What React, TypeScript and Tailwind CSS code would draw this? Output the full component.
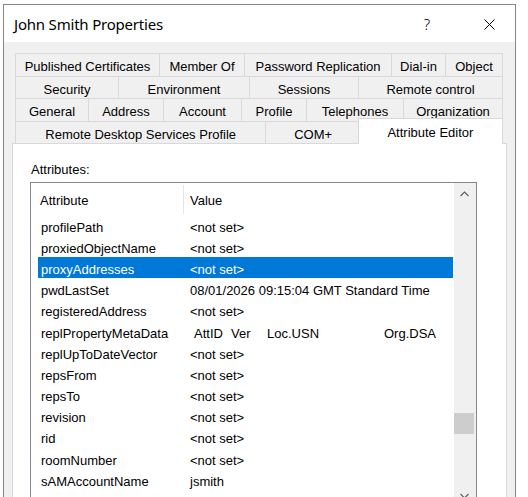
import React from 'react'

type Tab = { label: string; w: string }

const TAB_ROWS: { h: string; tabs: Tab[] }[] = [
  {
    h: 'h-[23px]',
    tabs: [
      { label: 'Published Certificates', w: 'w-[144px]' },
      { label: 'Member Of', w: 'w-[85px]' },
      { label: 'Password Replication', w: 'w-[147px]' },
      { label: 'Dial-in', w: 'w-[54px]' },
      { label: 'Object', w: 'w-[58px]' },
    ],
  },
  {
    h: 'h-[22px]',
    tabs: [
      { label: 'Security', w: 'w-[103px]' },
      { label: 'Environment', w: 'w-[131px]' },
      { label: 'Sessions', w: 'w-[109px]' },
      { label: 'Remote control', w: 'w-[145px]' },
    ],
  },
  {
    h: 'h-[23px]',
    tabs: [
      { label: 'General', w: 'w-[73px]' },
      { label: 'Address', w: 'w-[75px]' },
      { label: 'Account', w: 'w-[78px]' },
      { label: 'Profile', w: 'w-[65px]' },
      { label: 'Telephones', w: 'w-[97px]' },
      { label: 'Organization', w: 'w-[100px]' },
    ],
  },
]

const ATTRIBUTES: { name: string; value: string }[] = [
  { name: 'profilePath', value: '<not set>' },
  { name: 'proxiedObjectName', value: '<not set>' },
  { name: 'proxyAddresses', value: '<not set>' },
  { name: 'pwdLastSet', value: '08/01/2026 09:15:04 GMT Standard Time' },
  { name: 'registeredAddress', value: '<not set>' },
  { name: 'replPropertyMetaData', value: 'META' },
  { name: 'replUpToDateVector', value: '<not set>' },
  { name: 'repsFrom', value: '<not set>' },
  { name: 'repsTo', value: '<not set>' },
  { name: 'revision', value: '<not set>' },
  { name: 'rid', value: '<not set>' },
  { name: 'roomNumber', value: '<not set>' },
  { name: 'sAMAccountName', value: 'jsmith' },
]

const SELECTED = 'proxyAddresses'

function TabRow({ h, tabs }: { h: string; tabs: Tab[] }) {
  return (
    <div className={`flex ${h}`}>
      {tabs.map((t, i) => (
        <div
          key={t.label}
          className={`${t.w} pt-[4px] flex items-center justify-center border-t border-l border-[#d9d9d9] bg-[#f0f0f0] ${
            i === tabs.length - 1 ? 'border-r' : ''
          }`}
        >
          {t.label}
        </div>
      ))}
    </div>
  )
}

function Chevron({ down }: { down?: boolean }) {
  return (
    <svg width="9" height="6" viewBox="0 0 9 6" className={down ? 'rotate-180' : ''}>
      <path d="M0.5 5 L4.5 1 L8.5 5" fill="none" stroke="#606060" strokeWidth="1.2" />
    </svg>
  )
}

export default function App() {
  return (
    <div
      className="w-[528px] h-[497px] overflow-hidden bg-white pt-[4px] pl-[3px] text-[13px] text-black"
      style={{ fontFamily: '"Liberation Sans", Arial, sans-serif' }}
    >
      <div className="w-[513px] h-[540px] border border-[#868686] bg-[#f0f0f0] flex flex-col">
        {/* Title bar */}
        <div
          className="h-[38px] bg-white flex items-center justify-between pl-[10px] pt-[1px]"
          style={{ fontFamily: '"Noto Sans", "Open Sans", sans-serif' }}
        >
          <span className="text-[15px] tracking-[-0.2px]">John Smith Properties</span>
          <div className="flex items-center gap-[16px] mr-[3px]">
            <div className="w-[46px] flex justify-center text-[15px] font-light">?</div>
            <div className="w-[46px] flex justify-center">
              <svg width="11" height="11" viewBox="0 0 11 11">
                <path d="M0.5 0.5 L10.5 10.5 M10.5 0.5 L0.5 10.5" stroke="#000" strokeWidth="1" />
              </svg>
            </div>
          </div>
        </div>

        {/* Body */}
        <div className="flex-1 pt-[11px] px-[8px]">
          <div className="ml-[3px] w-[488px]">
            {TAB_ROWS.map((r, i) => (
              <TabRow key={i} h={r.h} tabs={r.tabs} />
            ))}
            <div className="flex items-end h-[22px]">
              <div className="w-[252px] h-full pt-[4px] flex items-center justify-center border-t border-l border-[#d9d9d9]">
                Remote Desktop Services Profile
              </div>
              <div className="w-[95px] h-full pt-[4px] flex items-center justify-center border-t border-l border-[#d9d9d9]">
                COM+
              </div>
              <div className="relative z-10 -ml-[2px] -mb-[1px] w-[146px] h-[26px] pt-[2px] flex items-center justify-center border-t border-l border-r border-[#d9d9d9] bg-white">
                Attribute Editor
              </div>
            </div>
          </div>

          {/* Page */}
          <div className="w-[495px] h-[400px] border border-[#d9d9d9] bg-white px-[17px] pt-[18px]">
            <div className="pl-[1px] leading-[15px]">Attributes:</div>
            <div className="mt-[5px] w-[447px] h-[330px] border border-[#828790] flex">
              <div className="flex-1">
                <div className="h-[32px] flex">
                  <div className="w-[152px] pl-[9px] pt-[4px] flex items-center">Attribute</div>
                  <div className="w-[1px] mt-[2px] h-[29px] bg-[#e5e5e5]" />
                  <div className="pl-[6px] pt-[4px] flex items-center">Value</div>
                </div>
                <div className="ml-[7px] mr-[1px]">
                  {ATTRIBUTES.map(a => {
                    const sel = a.name === SELECTED
                    return (
                      <div
                        key={a.name}
                        className={`h-[21.17px] pt-[4px] flex items-center whitespace-nowrap ${
                          sel ? 'bg-[#0078d7] text-white' : ''
                        }`}
                      >
                        <div className="w-[149px] pl-[3px]">{a.name}</div>
                        {a.value === 'META' ? (
                          <div className="flex pl-[7px]">
                            <span className="w-[37px]">AttID</span>
                            <span className="w-[36px]">Ver</span>
                            <span className="w-[117px]">Loc.USN</span>
                            <span>Org.DSA</span>
                          </div>
                        ) : (
                          <div className="pl-[3px]">{a.value}</div>
                        )}
                      </div>
                    )
                  })}
                </div>
              </div>

              {/* Scrollbar */}
              <div className="w-[22px] bg-[#f0f0f0] flex flex-col">
                <div className="h-[22px] flex items-center justify-center pr-[2px]">
                  <Chevron />
                </div>
                <div className="h-[208px]" />
                <div className="h-[21px] mr-[2px] bg-[#cdcdcd]" />
                <div className="h-[51px]" />
                <div className="h-[22px] flex items-center justify-center pr-[2px]">
                  <Chevron down />
                </div>
              </div>
            </div>
          </div>
        </div>
      </div>
    </div>
  )
}
